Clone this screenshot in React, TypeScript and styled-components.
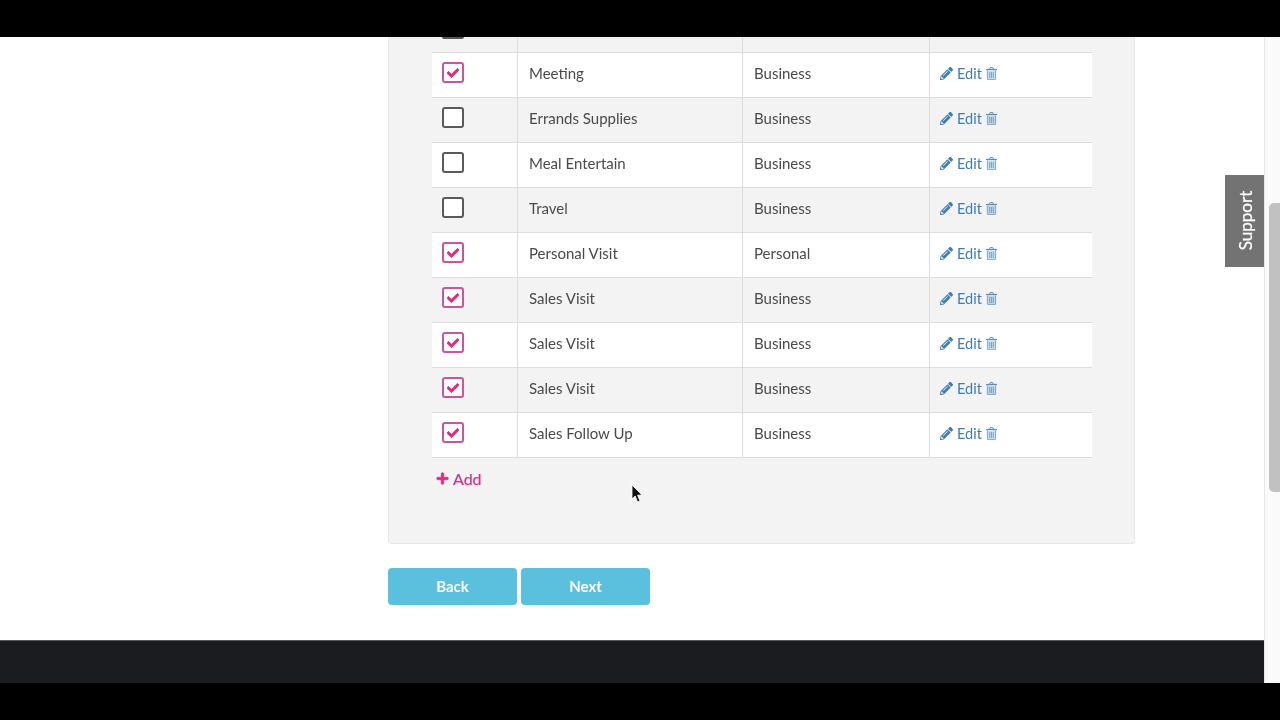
import React from 'react';
import styled, { createGlobalStyle } from 'styled-components';
import { FaCheck, FaPencilAlt, FaPlus } from 'react-icons/fa';

const rows = [
    { name: 'Meeting', type: 'Business', checked: true },
    { name: 'Errands Supplies', type: 'Business', checked: false },
    { name: 'Meal Entertain', type: 'Business', checked: false },
    { name: 'Travel', type: 'Business', checked: false },
    { name: 'Personal Visit', type: 'Personal', checked: true },
    { name: 'Sales Visit', type: 'Business', checked: true },
    { name: 'Sales Visit', type: 'Business', checked: true },
    { name: 'Sales Visit', type: 'Business', checked: true },
    { name: 'Sales Follow Up', type: 'Business', checked: true },
];

const TrashIcon = () => (
    <TrashSvg viewBox='0 0 11 13'>
        <path d='M3.6 2 L4.2 0.6 H6.8 L7.4 2' fill='none' stroke='currentColor' strokeWidth='1' />
        <rect x='0' y='1.9' width='11' height='1.2' fill='currentColor' />
        <path d='M1.4 3.4 V12 Q1.4 12.6 2 12.6 H9 Q9.6 12.6 9.6 12 V3.4 Z' fill='currentColor' opacity='0.3' />
        <path
            d='M1.4 3.4 V12 Q1.4 12.6 2 12.6 H9 Q9.6 12.6 9.6 12 V3.4 M3.7 5 V11 M5.5 5 V11 M7.3 5 V11'
            fill='none'
            stroke='currentColor'
            strokeWidth='0.7'
        />
    </TrashSvg>
);

const App = () => {
    return (
        <Frame>
            <GlobalStyle />
            <Letterbox />
            <Viewport>
                <Page>
                    <Content>
                        <Panel>
                            <CutRow>
                                <CutCheckCell>
                                    <CutCheckbox />
                                </CutCheckCell>
                                <CutCell />
                                <CutCell />
                                <div />
                            </CutRow>
                            {rows.map((row, index) => (
                                <Row key={index} shaded={index % 2 === 1}>
                                    <CheckCell>
                                        <Checkbox checked={row.checked}>
                                            {row.checked && <FaCheck />}
                                        </Checkbox>
                                    </CheckCell>
                                    <Cell>{row.name}</Cell>
                                    <Cell>{row.type}</Cell>
                                    <Actions>
                                        <FaPencilAlt />
                                        <span>Edit</span>
                                        <TrashIcon />
                                    </Actions>
                                </Row>
                            ))}
                            <AddLink>
                                <FaPlus />
                                Add
                            </AddLink>
                        </Panel>
                        <ButtonRow>
                            <Button>Back</Button>
                            <Button>Next</Button>
                        </ButtonRow>
                    </Content>
                    <Footer />
                    <SupportTab>
                        <span>Support</span>
                    </SupportTab>
                    <Cursor viewBox='0 0 12 20'>
                        <path
                            d='M1 1 L1 15 L4.2 12 L6.6 18 L9 17 L6.6 11.2 L11 11 Z'
                            fill='#111'
                            stroke='#fff'
                            strokeWidth='0.8'
                        />
                    </Cursor>
                </Page>
                <Scrollbar>
                    <Thumb />
                </Scrollbar>
            </Viewport>
            <Letterbox />
        </Frame>
    );
};

export default App;

const GlobalStyle = createGlobalStyle`
    html, body {
        margin: 0;
        padding: 0;
        background: #000000;
        overflow: hidden;
    }
    body {
        font-family: Lato, "Open Sans", sans-serif;
    }
`;
const Frame = styled.div`
    display: flex;
    flex-direction: column;
    width: 1280px;
    height: 720px;
`;
const Letterbox = styled.div`
    flex: 0 0 37px;
    background: #000000;
`;
const Viewport = styled.div`
    display: flex;
    flex: 1;
    min-height: 0;
    background: #ffffff;
    filter: blur(0.35px);
`;
const Page = styled.div`
    position: relative;
    display: flex;
    flex-direction: column;
    justify-content: space-between;
    flex: 1;
`;
const Content = styled.div`
    padding: 0 129px 0 388px;
`;
const Panel = styled.div`
    display: flex;
    flex-direction: column;
    height: 507px;
    box-sizing: border-box;
    padding: 0 42px 0 43px;
    background: #f3f3f3;
    border: 1px solid #e6e6e6;
    border-top: none;
    border-radius: 0 0 4px 4px;
`;
const CutRow = styled.div`
    display: grid;
    flex: none;
    grid-template-columns: 86px 225px 187px 1fr;
    height: 16px;
    border-bottom: 1px solid #dddddd;
    box-sizing: border-box;
    overflow: hidden;
`;
const CutCheckCell = styled.div`
    display: flex;
    justify-content: flex-start;
    align-items: flex-start;
    padding-left: 10px;
    border-right: 1px solid #dddddd;
`;
const CutCheckbox = styled.div`
    flex: none;
    width: 22px;
    height: 2px;
    background: #555555;
    border-radius: 0 0 3px 3px;
`;
const CutCell = styled.div`
    border-right: 1px solid #dddddd;
`;
const Row = styled.div<{ shaded: boolean }>`
    display: grid;
    flex: none;
    grid-template-columns: 86px 225px 187px 1fr;
    height: 45px;
    box-sizing: border-box;
    border-bottom: 1px solid #dddddd;
    background: ${(props) => (props.shaded ? '#f3f3f3' : '#ffffff')};
`;
const Cell = styled.div`
    display: flex;
    align-items: center;
    padding: 0 0 4px 11px;
    border-right: 1px solid #dddddd;
    color: #4a4a4a;
    font-size: 15px;
`;
const CheckCell = styled.div`
    display: flex;
    align-items: center;
    padding: 0 0 5px 10px;
    border-right: 1px solid #dddddd;
`;
const Checkbox = styled.div<{ checked: boolean }>`
    display: flex;
    align-items: center;
    justify-content: center;
    width: 22px;
    height: 21px;
    box-sizing: border-box;
    border: 2px solid ${(props) => (props.checked ? '#c9559a' : '#5a5a5a')};
    border-radius: 3px;
    background: #ffffff;
    color: #d92f80;
    font-size: 12px;
    svg {
        stroke: currentColor;
        stroke-width: 40px;
    }
`;
const Actions = styled.div`
    display: flex;
    align-items: center;
    gap: 4px;
    padding: 0 0 4px 10px;
    color: #3f7cb0;
    font-size: 14.5px;
    svg {
        font-size: 13px;
    }
`;
const TrashSvg = styled.svg`
    width: 11px;
    height: 13px;
    color: #5a8db8;
`;
const AddLink = styled.div`
    display: flex;
    align-items: center;
    gap: 4px;
    margin: 11px 0 0 4px;
    color: #d92f80;
    font-size: 16px;
    -webkit-text-stroke: 0.2px #d92f80;
    svg {
        font-size: 13px;
        stroke: currentColor;
        stroke-width: 30px;
    }
`;
const ButtonRow = styled.div`
    display: flex;
    gap: 4px;
    margin-top: 24px;
`;
const Button = styled.button`
    width: 129px;
    height: 37px;
    padding: 0 0 2px;
    border: none;
    border-radius: 4px;
    background: #5bc0de;
    color: #ffffff;
    font-family: Lato, "Open Sans", sans-serif;
    font-size: 15px;
    font-weight: 700;
`;
const Footer = styled.div`
    height: 43px;
    background: #1a1c20;
    border-top: 1px solid #55575a;
    box-sizing: border-box;
`;
const SupportTab = styled.div`
    position: absolute;
    top: 138px;
    right: 0;
    display: flex;
    align-items: center;
    justify-content: center;
    width: 39px;
    height: 92px;
    box-sizing: border-box;
    padding: 0 0 2px 3px;
    background: #737373;
    color: #ffffff;
    font-size: 17px;
    -webkit-text-stroke: 0.2px #ffffff;
    span {
        transform: rotate(-90deg);
    }
`;
const Cursor = styled.svg`
    position: absolute;
    left: 631px;
    top: 447px;
    width: 12px;
    height: 20px;
`;
const Scrollbar = styled.div`
    flex: 0 0 16px;
    box-sizing: border-box;
    padding: 166px 0 0 4px;
    background: #fafafa;
    border-left: 1px solid #e6e6e6;
`;
const Thumb = styled.div`
    height: 289px;
    background: #c1c1c1;
    border-radius: 5px 0 0 5px;
`;
